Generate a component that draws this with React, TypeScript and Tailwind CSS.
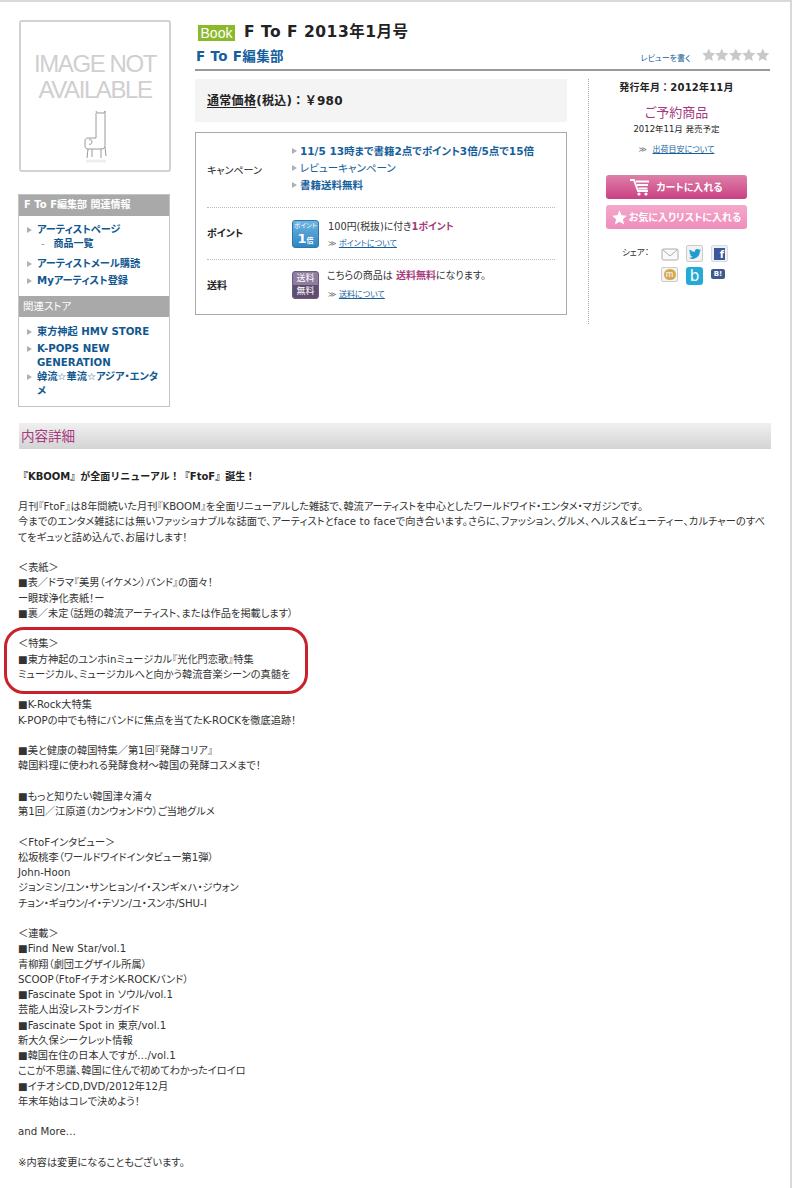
import React from "react";

const fontStack = "font-['DejaVu_Sans','Noto_Sans_CJK_JP',sans-serif]";

function Arrow() {
  return <span className="mt-[4px] mr-[3px] h-0 w-0 shrink-0 border-y-[3.5px] border-l-[5px] border-y-transparent border-l-[#aab2b8]" />;
}

function SideLink({ children }: { children: React.ReactNode }) {
  return (
    <div className="flex pr-[4px] text-[10.2px] leading-[14px] font-bold text-[#10588f]">
      <Arrow />
      <span className="ml-[2px]">{children}</span>
    </div>
  );
}

function Chair() {
  return (
    <svg width="30" height="56" viewBox="0 0 30 56" fill="none" stroke="#9a9a9a" strokeWidth="1">
      <path d="M16 2l1 2h7l1-2v34c0 3-1 4-4 4H9c-3 0-4-1-4-3v-5c0-2 1-3 3-3h8V4" />
      <path d="M8 40l-1 9M12 40v8M21 40v9M25 38l1 9M9 31c2-1 3 0 3 2s-2 3-3 2" />
      <path d="M6 52h20" stroke="#eeeeee" strokeWidth="3" />
    </svg>
  );
}

function CartIcon() {
  return (
    <svg width="20" height="17" viewBox="0 0 20 17" fill="none" stroke="#fff" strokeWidth="1.8">
      <path d="M0 1h4l4 11h10M6 2.5h13M7 6h11M8.5 9.5h9" />
      <circle cx="9" cy="15" r="1.6" fill="#fff" stroke="none" />
      <circle cx="16" cy="15" r="1.6" fill="#fff" stroke="none" />
    </svg>
  );
}

function Star({ color, size }: { color: string; size: number }) {
  return (
    <svg width={size} height={size} viewBox="0 0 24 24" fill={color}>
      <path d="M12 0.8l3.4 7.6 8.3.9-6.2 5.6 1.8 8.2L12 18.9l-7.3 4.2 1.8-8.2L.3 9.3l8.3-.9z" />
    </svg>
  );
}

function ShareIcons() {
  return (
    <div className="mt-[16px] ml-[16px] flex">
      <span className="mt-[1px] w-[39px] text-[8.5px] leading-[12px] text-[#333]">シェア：</span>
      <div className="grid grid-cols-[repeat(3,17px)] gap-x-[8px] gap-y-[4px]">
        <svg width="18" height="18" viewBox="0 0 18 18" fill="#fafafa" stroke="#aaa">
          <rect x="1" y="4" width="16" height="11" rx="1.5" />
          <path d="M1.5 4.5L9 11l7.5-6.5" fill="none" />
        </svg>
        <div className="flex h-[17px] w-[17px] items-center justify-center rounded-[2px] border border-[#ccc] bg-[#f2f2f2]">
          <svg width="12" height="10" viewBox="0 0 24 20" fill="#1f9bd1">
            <path d="M24 2.4c-.9.4-1.8.7-2.8.8 1-.6 1.8-1.6 2.2-2.7-1 .6-2 1-3.1 1.2A4.9 4.9 0 0 0 11.900 6.200 14 14 0 0 1 1.700 1 4.900 4.900 0 0 0 3.200 7.600c-.8 0-1.600-.2-2.200-.6 0 2.400 1.700 4.400 3.900 4.900-.7.2-1.500.2-2.200.1.600 2 2.400 3.400 4.600 3.400A9.900 9.900 0 0 1 0 17.400 14 14 0 0 0 21.500 5c1-.7 1.800-1.600 2.500-2.600z" />
          </svg>
        </div>
        <div className="flex h-[17px] w-[17px] items-center justify-center rounded-[2px] border border-[#d4dbe6] bg-[#eef1f5]">
          <span className="flex h-[12px] w-[11px] items-end justify-end bg-[#3b5998] pr-[1px] text-[10px] leading-[11px] font-bold text-white">f</span>
        </div>
        <div className="flex h-[15px] w-[17px] items-center justify-center rounded-[2px] border border-[#ccc] bg-[#f4f4f4]">
          <span className="flex h-[11px] w-[12px] items-center justify-center rounded-full bg-[#d2aa52] font-['Liberation_Sans'] text-[9px] leading-none text-white">m</span>
        </div>
        <div className="flex h-[18px] w-[17px] items-center justify-center rounded-[3px] bg-[#25a9d6] text-[15px] leading-[16px] text-white">b</div>
        <div className="mt-[2px] flex h-[10px] w-[14px] items-center justify-center rounded-[2px] bg-[#3f5a8f] text-[7px] leading-none font-bold text-white">B!</div>
      </div>
    </div>
  );
}

const intro = [
  "月刊『FtoF』は8年間続いた月刊『KBOOM』を全面リニューアルした雑誌で、韓流アーティストを中心としたワールドワイド・エンタメ・マガジンです。",
  "今までのエンタメ雑誌には無いファッショナブルな誌面で、アーティストとface to faceで向き合います。さらに、ファッション、グルメ、ヘルス＆ビューティー、カルチャーのすべ",
  "てをギュッと詰め込んで、お届けします！",
  "",
  "＜表紙＞",
  "■表／ドラマ『美男（イケメン）バンド』の面々！",
  "ー眼球浄化表紙！ー",
  "■裏／未定（話題の韓流アーティスト、または作品を掲載します）",
  "",
];

const feature = ["＜特集＞", "■東方神起のユンホinミュージカル『光化門恋歌』特集", "ミュージカル、ミュージカルへと向かう韓流音楽シーンの真髄を"];

const rest = [
  "",
  "■K-Rock大特集",
  "K-POPの中でも特にバンドに焦点を当てたK-ROCKを徹底追跡！",
  "",
  "■美と健康の韓国特集／第1回『発酵コリア』",
  "韓国料理に使われる発酵食材～韓国の発酵コスメまで！",
  "",
  "■もっと知りたい韓国津々浦々",
  "第1回／江原道（カンウォンドウ）ご当地グルメ",
  "",
  "＜FtoFインタビュー＞",
  "松坂桃李（ワールドワイドインタビュー第1弾）",
  "John-Hoon",
  "ジョンミン/ユン・サンヒョン/イ・スンギ×ハ・ジウォン",
  "チョン・ギョウン/イ・テソン/ユ・スンホ/SHU-I",
  "",
  "＜連載＞",
  "■Find New Star/vol.1",
  "青柳翔（劇団エグザイル所属）",
  "SCOOP（FtoFイチオシK-ROCKバンド）",
  "■Fascinate Spot in ソウル/vol.1",
  "芸能人出没レストランガイド",
  "■Fascinate Spot in 東京/vol.1",
  "新大久保シークレット情報",
  "■韓国在住の日本人ですが…/vol.1",
  "ここが不思議、韓国に住んで初めてわかったイロイロ",
  "■イチオシCD,DVD/2012年12月",
  "年末年始はコレで決めよう！",
  "",
  "and More…",
  "",
  "※内容は変更になることもございます。",
];

function Lines({ items }: { items: string[] }) {
  return (
    <>
      {items.map((line, i) => (
        <div key={i} className={line.length > 80 ? "h-[15.25px] tracking-[0.14px] whitespace-nowrap" : "h-[15.25px] whitespace-nowrap"}>
          {line}
        </div>
      ))}
    </>
  );
}

export default function App() {
  return (
    <div className={`${fontStack} h-[1188px] w-[793px] overflow-hidden bg-white [font-feature-settings:'palt']`}>
      <div className="h-[1188px] w-[792px] border-t-2 border-r-2 border-[#d9d9d9] pt-[18px] pl-[18px]">
        <div className="flex">
          {/* left column */}
          <div className="w-[152px] shrink-0">
            <div className="ml-[1px] flex h-[152px] w-[152px] flex-col items-center rounded-[3px] border-2 border-[#d2d2d2] pt-[29px] font-['Liberation_Sans'] text-[24px] leading-[26px] tracking-[-1.4px] text-[#cfcfcf]">
              <div className="text-center whitespace-nowrap">IMAGE NOT</div>
              <div className="text-center whitespace-nowrap">AVAILABLE</div>
              <div className="mt-[6px]"><Chair /></div>
            </div>
            <div className="mt-[22px] h-[213px] border border-[#c4c4c4]">
              <div className="h-[21px] bg-[#a9a9a9] pl-[5px] text-[10px] leading-[20px] font-bold text-white">F To F編集部 関連情報</div>
              <div className="pt-[7px] pl-[8px]">
                <SideLink>アーティストページ</SideLink>
                <div className="pl-[16px] text-[10px] leading-[14px] font-bold text-[#10588f]"><span className="mr-[9px] ml-[-2px] font-normal text-[#999]">-</span>商品一覧</div>
                <div className="mt-[6px]"><SideLink>アーティストメール購読</SideLink></div>
                <div className="mt-[3px]"><SideLink>Myアーティスト登録</SideLink></div>
              </div>
              <div className="mt-[8px] h-[21px] bg-[#a9a9a9] pl-[4px] text-[10.5px] leading-[20px] text-white">関連ストア</div>
              <div className="pt-[8px] pl-[8px]">
                <SideLink>東方神起 HMV STORE</SideLink>
                <div className="mt-[3px]"><SideLink>K-POPS NEW GENERATION</SideLink></div>
                <SideLink>韓流☆華流☆アジア・エンタメ</SideLink>
              </div>
            </div>
          </div>

          {/* right area */}
          <div className="ml-[25px] w-[575px] shrink-0">
            <div className="flex items-center pl-[3px]">
              <span className="mt-[1px] flex h-[16px] w-[37px] items-center justify-center bg-[#8cb92c] font-['Liberation_Sans'] text-[14px] leading-none text-white">Book</span>
              <h1 className="ml-[9px] text-[15.5px] leading-[24px] font-bold tracking-[0.5px] text-[#222]">F To F 2013年1月号</h1>
            </div>
            <div className="flex h-[27px] items-center border-b-2 border-[#999]">
              <span className="pl-[1px] text-[13.5px] font-bold tracking-[0.3px] text-[#15609b]">F To F編集部</span>
              <span className="mt-[4px] ml-auto text-[8px] text-[#15609b]">レビューを書く</span>
              <span className="mt-[-3px] mr-[1px] ml-[11px] flex">
                {[0, 1, 2, 3, 4].map((i) => <Star key={i} color="#c9c9c9" size={13.5} />)}
              </span>
            </div>

            <div className="mt-[8px] flex">
              <div className="w-[372px] shrink-0">
                <div className="flex h-[43px] items-center bg-[#f4f4f4] pl-[12px] text-[12px] font-bold tracking-[0.3px] text-[#222] [font-feature-settings:normal]">
                  <span className="underline underline-offset-2">通常価格</span>(税込)：￥980
                </div>
                <div className="mt-[10px] h-[183px] border border-[#aaaaaa] px-[11px]">
                  <div className="flex h-[75px] items-center border-b border-dotted border-[#bbb]">
                    <div className="w-[85px] text-[10px] text-[#222]">キャンペーン</div>
                    <div className="mb-[4px] flex flex-col gap-[3px] text-[10.5px] leading-[14px] font-bold text-[#15609b]">
                      <div className="flex"><Arrow />11/5 13時まで書籍2点でポイント3倍/5点で15倍</div>
                      <div className="flex"><Arrow /><span className="font-normal">レビューキャンペーン</span></div>
                      <div className="flex"><Arrow />書籍送料無料</div>
                    </div>
                  </div>
                  <div className="flex h-[52px] items-center border-b border-dotted border-[#bbb]">
                    <div className="w-[85px] text-[10px] font-bold text-[#222]">ポイント</div>
                    <div className="flex h-[28px] w-[27px] flex-col items-center overflow-hidden rounded-[3px] border border-[#2b78b0] bg-gradient-to-b from-[#6db3e0] to-[#2f86c4] text-white">
                      <span className="text-[6.5px] leading-[10px]">ポイント</span>
                      <span className="text-[13px] leading-[15px] font-bold">1<span className="text-[7px]">倍</span></span>
                    </div>
                    <div className="mt-[3px] ml-[9px]">
                      <div className="text-[9.8px] leading-[14px] text-[#333]">100円(税抜)に付き<b className="text-[#a53a7c]">1ポイント</b></div>
                      <div className="mt-[4px] text-[8px] leading-[12px] text-[#666]">≫ <span className="text-[#15609b] underline">ポイントについて</span></div>
                    </div>
                  </div>
                  <div className="flex h-[54px] items-center pb-[4px]">
                    <div className="w-[85px] text-[10px] font-bold text-[#222]">送料</div>
                    <div className="flex h-[28px] w-[27px] flex-col items-center overflow-hidden rounded-[3px] border border-[#6d5a7e] bg-[#8f7da0] text-[9px] leading-[13px] text-white">
                      <span>送料</span>
                      <span className="w-full bg-[#5f4e70] text-center">無料</span>
                    </div>
                    <div className="ml-[8px]">
                      <div className="text-[10px] leading-[14px] text-[#333]">こちらの商品は <b className="text-[#a53a7c]">送料無料</b>になります。</div>
                      <div className="mt-[6px] ml-[1px] text-[8px] leading-[12px] text-[#666]">≫ <span className="text-[#15609b] underline">送料について</span></div>
                    </div>
                  </div>
                </div>
              </div>

              <div className="ml-[21px] h-[245px] flex-1 border-l border-dotted border-[#aaa] pt-[2px] pl-[17px]">
                <div className="w-[141px] text-center">
                  <div className="whitespace-nowrap text-[10px] leading-[14px] font-bold tracking-[0.2px] text-[#222] [font-feature-settings:normal]">発行年月：2012年11月</div>
                  <div className="mt-[9px] text-[13px] leading-[18px] text-[#a53a7c]">ご予約商品</div>
                  <div className="mt-[1px] text-[8.5px] leading-[12px] text-[#222]">2012年11月 発売予定</div>
                  <div className="mt-[9px] text-[8px] leading-[12px] text-[#666]">≫ <span className="ml-[3px] text-[#15609b] underline">出荷目安について</span></div>
                </div>
                <div className="mt-[19px] flex h-[24px] w-[141px] items-center justify-center gap-[6px] rounded-[3px] bg-gradient-to-b from-[#de7fa9] to-[#c93f84] text-[10px] font-bold text-white">
                  <CartIcon />カートに入れる
                </div>
                <div className="mt-[6px] flex h-[24px] w-[141px] items-center justify-center gap-[2px] rounded-[3px] bg-gradient-to-b from-[#f4a8cb] to-[#ee8dbb] text-[10px] font-bold whitespace-nowrap text-white">
                  <Star color="#fff" size={15} />お気に入りリストに入れる
                </div>
                <ShareIcons />
              </div>
            </div>
          </div>
        </div>

        {/* details */}
        <div className="mt-[16px] mr-[19px] ml-[1px] flex h-[26px] items-center bg-gradient-to-b from-[#f0f0f0] to-[#d4d4d4] pl-[2px] text-[13.5px] text-[#a53a7c]">
          内容詳細
        </div>
        <div className="mt-[20px] text-[10px] leading-[15px] font-bold text-[#222] [font-feature-settings:normal]">『KBOOM』が全面リニューアル！『FtoF』誕生！</div>
        <div className="mt-[15px] text-[10.2px] leading-[15.25px] text-[#333]">
          <Lines items={intro} />
          <div className="relative">
            <Lines items={feature} />
            <div className="absolute -top-[9px] -left-[14px] h-[67px] w-[304px] rounded-[20px] border-[3px] border-[#c9222c]" />
          </div>
          <Lines items={rest} />
        </div>
      </div>
    </div>
  );
}
